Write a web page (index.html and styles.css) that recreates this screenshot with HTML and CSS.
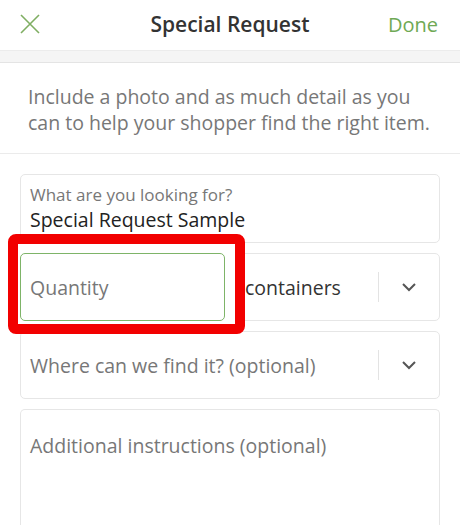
FILE: index.html
```html
<!DOCTYPE html>
<html lang="en">

<head>
    <meta charset="UTF-8">
    <meta name="viewport" content="width=device-width, initial-scale=1.0">
    <title>Special Request</title>
    <link rel="stylesheet" href="styles.css">
</head>

<body>
    <div class="topbar">
        <svg class="closeIcon" width="22" height="22" viewBox="0 0 22 22">
            <path d="M2 2 L20 20 M20 2 L2 20" stroke="#7fae62" stroke-width="1.6" fill="none" />
        </svg>
        <h1>Special Request</h1>
        <span class="doneBtn">Done</span>
    </div>
    <div class="band"></div>

    <div class="intro">
        <p>Include a photo and as much detail as you can to help your shopper find the right item.</p>
    </div>

    <div class="form">
        <div class="field">
            <label>What are you looking for?</label>
            <div class="value">Special Request Sample</div>
        </div>

        <div class="row">
            <div class="qty">
                <span class="placeholder">Quantity</span>
                <div class="highlight"></div>
            </div>
            <div class="field select">
                <span class="selText">containers</span>
                <span class="divider"></span>
                <svg class="chevron" width="16" height="10" viewBox="0 0 16 10">
                    <path d="M2 2 L8 8 L14 2" stroke="#555" stroke-width="2" fill="none" />
                </svg>
            </div>
        </div>

        <div class="field select">
            <span class="placeholder">Where can we find it? (optional)</span>
            <span class="divider"></span>
            <svg class="chevron" width="16" height="10" viewBox="0 0 16 10">
                <path d="M2 2 L8 8 L14 2" stroke="#555" stroke-width="2" fill="none" />
            </svg>
        </div>

        <div class="field notes">
            <span class="placeholder">Additional instructions (optional)</span>
        </div>
    </div>
</body>

</html>
```

FILE: styles.css
```css
* {
    box-sizing: border-box;
}

body {
    margin: 0;
    font-family: "Open Sans", sans-serif;
    background: #fff;
    overflow: hidden;
}

.topbar {
    height: 51px;
    display: flex;
    align-items: center;
    justify-content: space-between;
    padding: 0 22px 2px 19px;
    border-bottom: 1px solid #ececec;
}

.topbar h1 {
    margin: 0 0 0 31px;
    font-size: 21px;
    font-weight: 600;
    color: #333;
}

.doneBtn {
    font-size: 20px;
    color: #6fa955;
}

.band {
    height: 12px;
    background: #f5f5f5;
    border-bottom: 1px solid #e4e4e4;
}

.intro {
    padding: 21px 28px 0;
    height: 91px;
    border-bottom: 1px solid #ebebeb;
}

.intro p {
    margin: 0;
    font-size: 19.5px;
    line-height: 26px;
    color: #777;
}

.form {
    padding: 20px 20px 0;
    display: flex;
    flex-direction: column;
    gap: 10px;
}

.field {
    flex-shrink: 0;
    border: 1px solid #e6e6e6;
    border-radius: 5px;
    padding: 0 9px;
    height: 69px;
}

.field label {
    display: block;
    margin-top: 9px;
    font-size: 17px;
    line-height: 22px;
    color: #777;
}

.field .value {
    font-size: 19.5px;
    line-height: 28px;
    color: #222;
}

.row {
    display: flex;
    gap: 10px;
    flex-shrink: 0;
}

.qty {
    position: relative;
    width: 205px;
    height: 68px;
    border: 1px solid #7eb468;
    border-radius: 5px;
    padding: 0 9px;
    display: flex;
    align-items: center;
}

.highlight {
    position: absolute;
    left: -13px;
    top: -20px;
    right: -21px;
    bottom: -14px;
    border: 10px solid #f20000;
    border-radius: 8px;
}

.placeholder {
    font-size: 19.5px;
    color: #777;
}

.select {
    display: flex;
    align-items: center;
    height: 68px;
}

.row .select {
    flex: 1;
    padding-left: 9px;
}

.selText {
    font-size: 19.5px;
    color: #333;
    flex: 1;
}

.select .placeholder {
    flex: 1;
}

.divider {
    width: 1px;
    height: 30px;
    background: #e3e3e3;
    margin-right: 22px;
}

.chevron {
    margin-right: 13px;
}

/* card runs on below the fold */
.notes {
    height: 116px;
    padding-top: 22px;
    border-bottom: none;
    border-radius: 5px 5px 0 0;
}
```
